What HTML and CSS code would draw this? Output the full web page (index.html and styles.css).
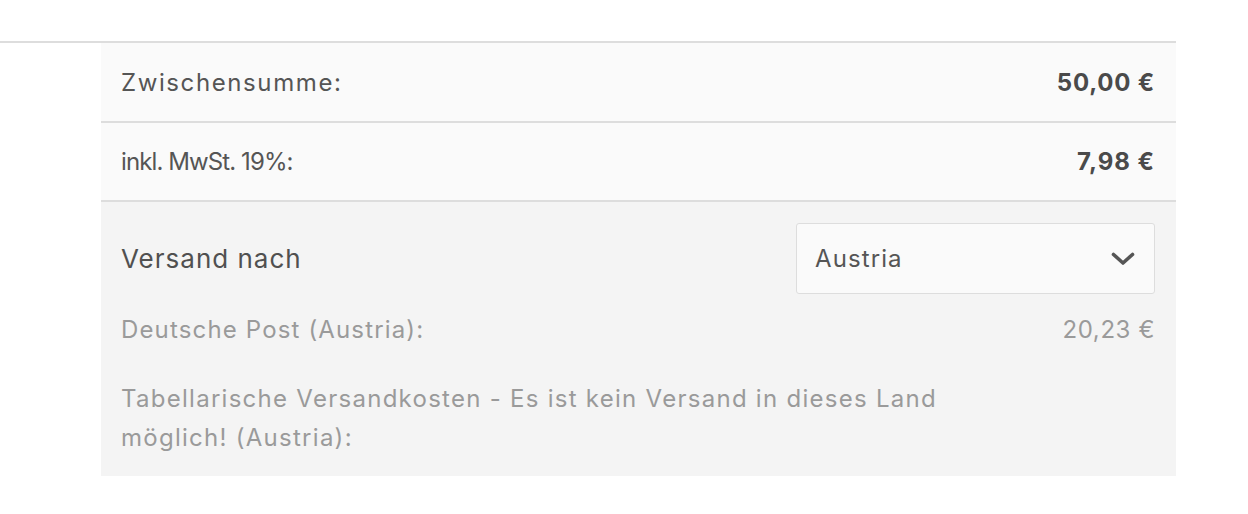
FILE: index.html
```html
<!DOCTYPE html>
<html lang="de">
<head>
<meta charset="utf-8">
<title>Warenkorb Summen</title>
<link rel="stylesheet" href="styles.css">
</head>
<body>
<div class="page">
  <div class="divider"></div>
  <div class="totals">
    <div class="row row-sub">
      <span class="label label-sub">Zwischensumme:</span>
      <span class="amount">50,00 €</span>
    </div>
    <div class="row row-tax">
      <span class="label label-tax">inkl. MwSt. 19%:</span>
      <span class="amount amount-tax">7,98 €</span>
    </div>
    <div class="shipping">
      <div class="ship-head">
        <span class="ship-label">Versand nach</span>
        <div class="select">
          <span class="select-value">Austria</span>
          <svg class="chevron" width="24" height="14" viewBox="0 0 24 14" aria-hidden="true">
            <path d="M2.5 2.5 L12 11 L21.5 2.5" fill="none" stroke="#555" stroke-width="3.6" stroke-linecap="round" stroke-linejoin="round"/>
          </svg>
        </div>
      </div>
      <div class="method">
        <span class="method-name">Deutsche Post (Austria):</span>
        <span class="method-price">20,23 €</span>
      </div>
      <div class="method method-multi">
        <span class="method-name wrap">Tabellarische Versandkosten - Es ist kein Versand in dieses Land möglich! (Austria):</span>
      </div>
    </div>
  </div>
</div>
</body>
</html>
```

FILE: styles.css
```css
* { box-sizing: border-box; }

body {
  margin: 0;
  background: #ffffff;
  font-family: "Inter", "Noto Sans", sans-serif;
  color: #555555;
}

.page {
  width: 1176px;
  padding-top: 41px;
}

.divider {
  border-top: 2px solid #dddddd;
}

.totals {
  margin-left: 101px;
  width: 1075px;
}

.row {
  display: flex;
  justify-content: space-between;
  align-items: center;
  padding: 0 21px 0 20px;
  background: #fafafa;
  border-bottom: 2px solid #dddddd;
  font-size: 24px;
}

.row-sub { height: 80px; }
.row-tax { height: 79px; }

.label {
  color: #555555;
}

.label-sub { letter-spacing: 1.6px; }
.label-tax { letter-spacing: -0.9px; }

.amount {
  font-weight: 700;
  color: #4a4a4a;
  letter-spacing: 0.8px;
}

.amount-tax { letter-spacing: 1px; }

.shipping {
  background: #f4f4f4;
  padding: 21px 21px 19px 20px;
}

.ship-head {
  display: flex;
  justify-content: space-between;
  align-items: center;
}

.ship-label {
  font-size: 26px;
  letter-spacing: 1px;
  color: #505050;
}

.select {
  width: 359px;
  height: 71px;
  border: 1px solid #dddddd;
  border-radius: 3px;
  background: #fafafa;
  display: flex;
  align-items: center;
  justify-content: space-between;
  padding: 0 19px 0 18px;
}

.select-value {
  font-size: 24px;
  letter-spacing: 1.1px;
  color: #555555;
}

.chevron {
  display: block;
}

.method {
  display: flex;
  justify-content: space-between;
  align-items: flex-start;
  font-size: 24px;
  color: #9a9a9a;
  line-height: 39px;
  margin-top: 16px;
}

.method-name { letter-spacing: 1.15px; }
.method-price { letter-spacing: 0.6px; }

.method-multi {
  margin-top: 30px;
}

.wrap {
  max-width: 850px;
  letter-spacing: 1.27px;
}
```
